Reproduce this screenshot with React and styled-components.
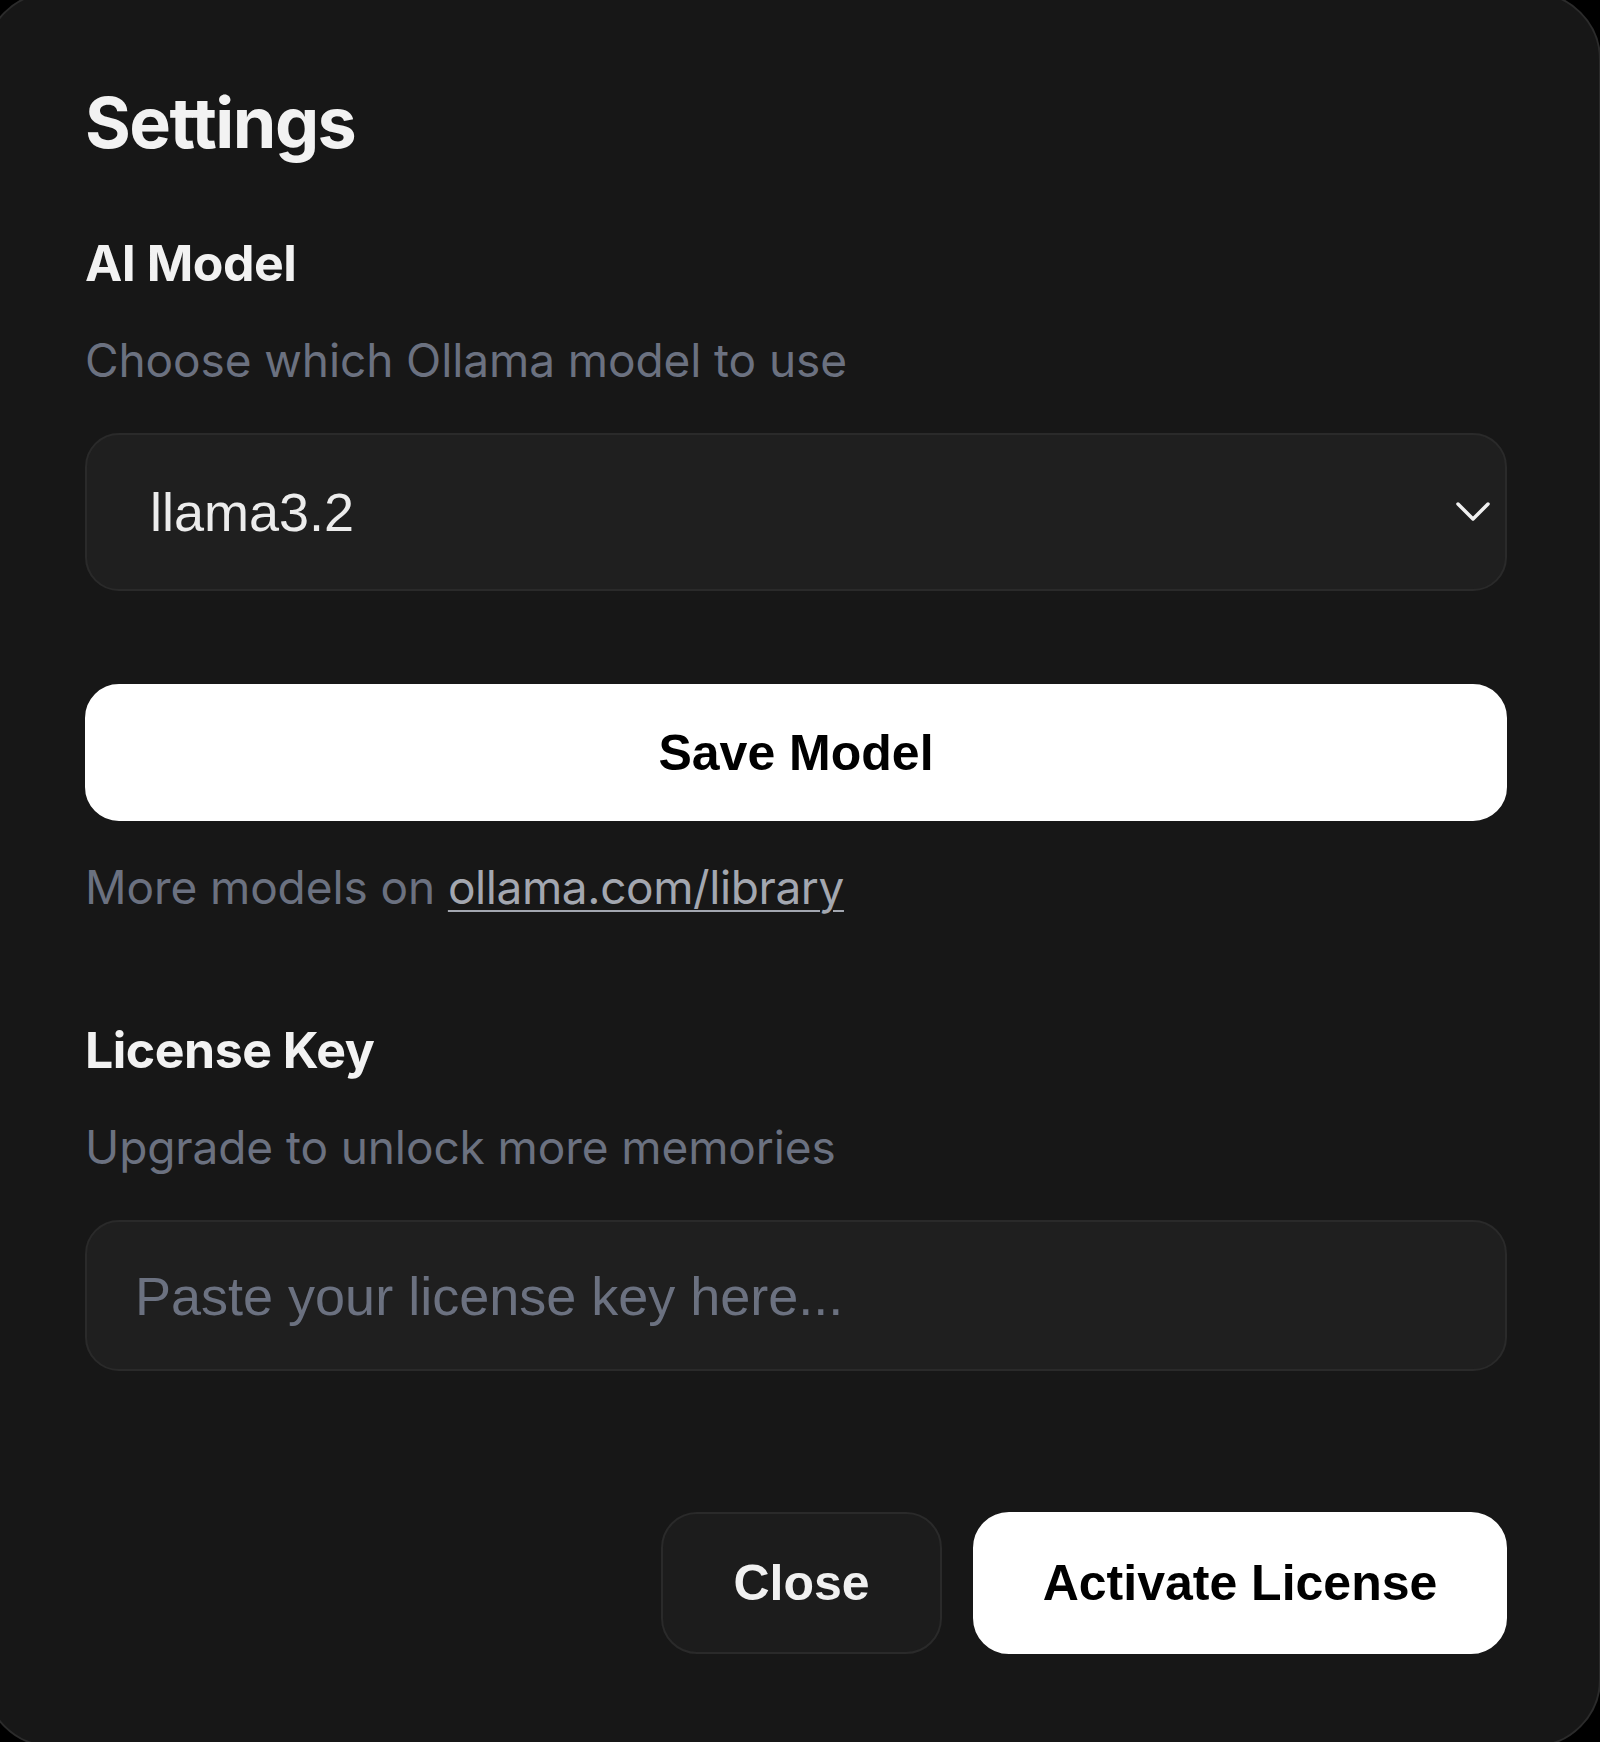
import React from "react";
import styled, { createGlobalStyle } from "styled-components";

const GlobalStyle = createGlobalStyle`
  html, body {
    margin: 0;
    padding: 0;
    background: #000;
    overflow: hidden;
  }
  * {
    box-sizing: border-box;
  }
`;

const Panel = styled.div`
  margin: -8px 0 0 -16px;
  width: 1617px;
  height: 1755px;
  background: #171717;
  border: 2px solid #2b2b2b;
  border-radius: 68px;
  padding: 94px 92px 0 99px;
  display: flex;
  flex-direction: column;
  font-family: Inter, "Noto Sans", sans-serif;
`;

const Title = styled.h1`
  margin: 0;
  font-size: 70px;
  line-height: 1;
  font-weight: 700;
  letter-spacing: -1.5px;
  color: #f2f2f2;
`;

const SectionTitle = styled.h2`
  margin: ${(p) => p.$top}px 0 0;
  font-size: 50px;
  line-height: 1;
  font-weight: 700;
  letter-spacing: -0.5px;
  color: #f2f2f2;
`;

const Hint = styled.p`
  margin: ${(p) => p.$top}px 0 0;
  font-size: 46px;
  line-height: 1;
  font-weight: 400;
  letter-spacing: -0.1px;
  color: #6b7180;
`;

const LibraryLink = styled.a`
  color: #a3a7b0;
  letter-spacing: -0.4px;
  text-decoration: underline;
  text-decoration-thickness: 2px;
  text-underline-offset: 6px;
`;

const SelectBox = styled.div`
  margin-top: 50px;
  height: 158px;
  background: #1f1f1f;
  border: 2px solid #2a2a2a;
  border-radius: 34px;
  display: flex;
  align-items: center;
  justify-content: space-between;
  padding: 0 14px 0 63px;
  font-family: "Liberation Sans", Arial, sans-serif;
  font-size: 54px;
  color: #ececec;
`;

const Chevron = () => (
  <svg width="36" height="22" viewBox="0 0 36 22" fill="none">
    <path d="M3 3 L18 18 L33 3" stroke="#f0f0f0" strokeWidth="3.5" strokeLinecap="round" strokeLinejoin="round" />
  </svg>
);

const Button = styled.button`
  height: ${(p) => p.$height || 142}px;
  width: ${(p) => (p.$width ? `${p.$width}px` : "100%")};
  border-radius: ${(p) => p.$radius || 36}px;
  border: 2px solid ${(p) => (p.$primary ? "#ffffff" : "#2a2a2a")};
  background: ${(p) => (p.$primary ? "#ffffff" : "#1c1c1c")};
  color: ${(p) => (p.$primary ? "#000000" : "#f0f0f0")};
  font-family: "Liberation Sans", Arial, sans-serif;
  font-weight: 700;
  font-size: ${(p) => p.$size || 50}px;
  cursor: pointer;
  padding: 0;
`;

const SaveButton = styled(Button)`
  margin-top: 93px;
`;

const KeyInput = styled.input`
  margin-top: 50px;
  height: 151px;
  width: 100%;
  background: #1f1f1f;
  border: 2px solid #2a2a2a;
  border-radius: 34px;
  padding: 0 0 0 48px;
  font-family: "Liberation Sans", Arial, sans-serif;
  font-size: 54px;
  color: #ececec;
  outline: none;

  &::placeholder {
    color: #6b7180;
  }
`;

const Footer = styled.div`
  margin-top: 141px;
  display: flex;
  justify-content: flex-end;
  gap: 31px;
`;

export default function App() {
  return (
    <>
      <GlobalStyle />
      <Panel>
        <Title>Settings</Title>

        <SectionTitle $top={80}>AI Model</SectionTitle>
        <Hint $top={49}>Choose which Ollama model to use</Hint>
        <SelectBox>
          <span>llama3.2</span>
          <Chevron />
        </SelectBox>
        <SaveButton $primary $height={137} $radius={34}>
          Save Model
        </SaveButton>
        <Hint $top={43}>
          More models on <LibraryLink href="#">ollama.com/library</LibraryLink>
        </Hint>

        <SectionTitle $top={115}>License Key</SectionTitle>
        <Hint $top={49}>Upgrade to unlock more memories</Hint>
        <KeyInput placeholder="Paste your license key here..." />

        <Footer>
          <Button $width={281}>Close</Button>
          <Button $primary $width={534}>Activate License</Button>
        </Footer>
      </Panel>
    </>
  );
}
